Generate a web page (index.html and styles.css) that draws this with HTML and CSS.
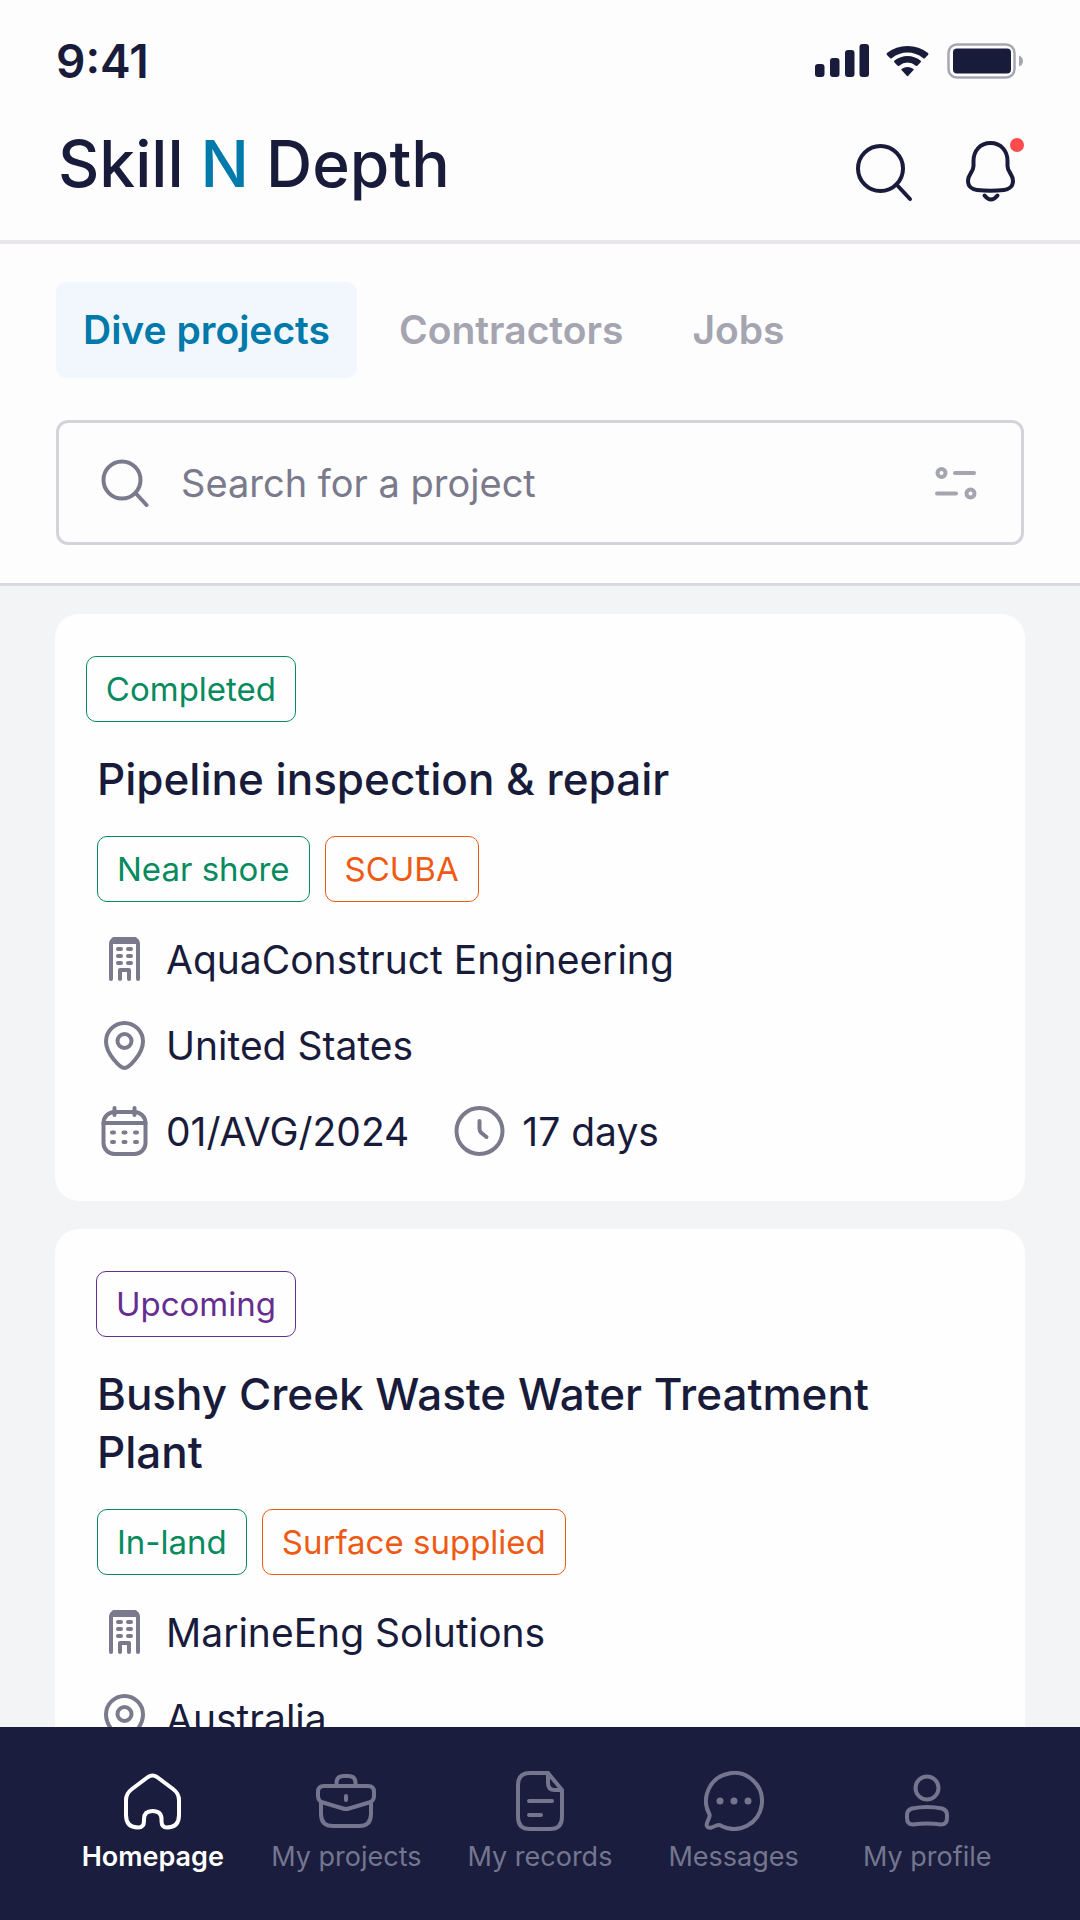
FILE: index.html
```html
<!DOCTYPE html>
<html lang="en">
<head>
<meta charset="utf-8">
<meta name="viewport" content="width=device-width, initial-scale=1">
<title>Skill N Depth</title>
<link rel="stylesheet" href="styles.css">
</head>
<body>
<svg class="sprite" aria-hidden="true">
  <symbol id="building" viewBox="0 0 54 54">
    <path d="M14 46V11q0-4 4-5h19q4 1 4 5v35M23 46v-9h9v9"/>
    <path d="M17 6h21M16 9h23M21 16h3M31 16h3M21 23h3M31 23h3M21 30h3M31 30h3"/>
  </symbol>
  <symbol id="pin" viewBox="0 0 54 54">
    <path d="M27.500 49C23.500 49 9 35 9 22.500a18.500 18.500 0 0 1 37 0C46 35 31.500 49 27.500 49z"/>
    <circle cx="27.500" cy="22" r="7"/>
  </symbol>
  <symbol id="calendar" viewBox="0 0 54 54">
    <rect x="6.500" y="7" width="42" height="42" rx="11"/>
    <path d="M6.500 18h42M17.500 3v7M37.500 3v7M15 27.500h2M26.500 27.500h2M38 27.500h2M15 37h2M26.500 37h2M38 37h2"/>
  </symbol>
  <symbol id="clock" viewBox="0 0 54 54">
    <circle cx="26.500" cy="26" r="23"/>
    <path d="M26.500 16v8q0 2 2 4l5 4"/>
  </symbol>
</svg>

<div class="app">
  <header class="header">
    <div class="status-bar">
      <time class="clock">9:41</time>
      <div class="indicators">
        <svg width="54" height="36" viewBox="0 0 54 36" fill="currentColor"><rect y="21" width="9.500" height="13" rx="3"/><rect x="15" y="15" width="9.500" height="19" rx="3"/><rect x="30" y="7" width="9.500" height="27" rx="3"/><rect x="44.500" y="1" width="9.500" height="33" rx="3"/></svg>
        <svg width="44" height="36" viewBox="0 0 44 36" fill="currentColor"><path d="M1 12Q0 11 1 10Q10 3 21.500 3T42 10Q43 11 42 12L39 15Q38 16 37 15Q30 9.500 21.500 9.500T6 15Q5 16 4 15Z"/><path d="M8.500 19.500Q7.500 18.500 8.500 17.500Q14.500 13 21.500 13T34.500 17.500Q35.500 18.500 34.500 19.500L31.500 22.500Q30.500 23.500 29.500 22.500Q26 19.500 21.500 19.500T13.500 22.500Q12.500 23.500 11.500 22.500Z"/><path d="M15.500 27Q15 26.500 15.500 26Q21.500 22 27.500 26Q28 26.500 27.500 27L22.500 32.500Q21.500 34 20.500 32.500Z"/></svg>
        <svg width="77" height="36" viewBox="0 0 77 36"><rect x="1.500" y="1.500" width="66" height="33" rx="8.500" fill="none" stroke="#a5a6b2" stroke-width="2.500"/><rect x="6" y="5.500" width="58" height="25" rx="4" fill="currentColor"/><path d="M72 12.500q4 1.500 4 5.500t-4 5.500z" fill="#a5a6b2"/></svg>
      </div>
    </div>
    <div class="brand-row">
      <h1 class="logo">Skill <span class="logo-accent">N</span> Depth</h1>
      <div class="header-actions">
        <button class="icon-button" type="button" aria-label="Search"><svg width="64" height="64" viewBox="0 0 64 64"><circle cx="27.500" cy="30.500" r="22.500"/><path d="M43.500 46.500L57 61"/></svg></button>
        <button class="icon-button" type="button" aria-label="Notifications"><svg width="64" height="64" viewBox="0 0 64 64"><path d="M30.500 5C20 5 13.500 13 13.500 23v5c0 6-5.500 8-5.500 15 0 6 5 8.500 9 9q13.500 1.500 27 0c4-.5 9-3 9-9 0-7-5.500-9-5.500-15v-5C47.500 13 41 5 30.500 5zM24.500 57.500q6.500 8 13 0"/><circle class="alert-dot" cx="57" cy="7" r="7"/></svg></button>
      </div>
    </div>
  </header>

  <section class="filters">
    <nav class="tabs" aria-label="Sections">
      <button class="tab tab-active" type="button">Dive projects</button>
      <button class="tab" type="button">Contractors</button>
      <button class="tab" type="button">Jobs</button>
    </nav>
    <div class="search">
      <svg class="search-icon" width="48" height="48" viewBox="0 0 48 48"><circle cx="21" cy="21" r="18.500"/><path d="M34.500 34L45.500 46"/></svg>
      <input class="search-input" type="text" placeholder="Search for a project" aria-label="Search for a project">
      <button class="filter-button" type="button" aria-label="Filters"><svg width="44" height="36" viewBox="0 0 44 36"><circle cx="6.500" cy="8" r="4"/><path d="M20 8h19M2 28.500h19"/><circle cx="35.500" cy="28.500" r="4"/></svg></button>
    </div>
  </section>

  <main class="projects">
    <article class="card">
      <div class="status"><span class="chip chip-green">Completed</span></div>
      <h2 class="title">Pipeline inspection &amp; repair</h2>
      <div class="chips"><span class="chip chip-green">Near shore</span><span class="chip chip-orange">SCUBA</span></div>
      <div class="details">
        <div class="detail"><svg class="icon"><use href="#building"/></svg>AquaConstruct Engineering</div>
        <div class="detail"><svg class="icon"><use href="#pin"/></svg>United States</div>
        <div class="detail-group">
          <div class="detail"><svg class="icon"><use href="#calendar"/></svg>01/AVG/2024</div>
          <div class="detail"><svg class="icon"><use href="#clock"/></svg>17 days</div>
        </div>
      </div>
    </article>
    <article class="card">
      <div class="status"><span class="chip chip-purple">Upcoming</span></div>
      <h2 class="title">Bushy Creek Waste Water Treatment Plant</h2>
      <div class="chips"><span class="chip chip-green">In-land</span><span class="chip chip-orange">Surface supplied</span></div>
      <div class="details">
        <div class="detail"><svg class="icon"><use href="#building"/></svg>MarineEng Solutions</div>
        <div class="detail"><svg class="icon"><use href="#pin"/></svg>Australia</div>
      </div>
    </article>
  </main>

  <nav class="bottom-nav" aria-label="Main">
    <a class="nav-item nav-active" href="#home"><svg class="nav-icon" viewBox="0 0 60 60"><path d="M25 6Q29.500 3 34 6L50 18Q56 22.500 56 29V44Q56 56.500 44 56.500Q38.500 56.500 38.500 50V48Q38.500 40 29.500 40Q21 40 21 48V50Q21 56.500 15 56.500Q3 56.500 3 44V29Q3 22.500 9 18Z"/></svg>Homepage</a>
    <a class="nav-item" href="#projects"><svg class="nav-icon" viewBox="0 0 60 60"><path d="M8 15h44q6 0 6 6v4q0 5-5 6.500l-20 6q-3 1-6 0l-20-6q-5-1.500-5-6.500v-4q0-6 6-6zM5 32v11q0 12 12 12h26q12 0 12-12V32M20.500 15v-3q0-7 7-7h5q7 0 7 7v3M30 25v4"/></svg>My projects</a>
    <a class="nav-item" href="#records"><svg class="nav-icon" viewBox="0 0 60 60"><path d="M38 2H20Q8 2 8 14V46Q8 58 20 58H40Q52 58 52 46V19L38 2V12q0 7 7 7h7M19 30h23M19 44h12"/></svg>My records</a>
    <a class="nav-item" href="#messages"><svg class="nav-icon" viewBox="0 0 60 60"><path d="M5.500 43.500A28 28 0 1 1 17.500 55q-2-1.500-5-.5l-5 2q-6 1-4.500-4.500l2-5q1-2 .5-3.500z"/><g fill="currentColor" stroke="none"><circle cx="16" cy="30" r="3.500"/><circle cx="30" cy="30" r="3.500"/><circle cx="44" cy="30" r="3.500"/></g></svg>Messages</a>
    <a class="nav-item" href="#profile"><svg class="nav-icon" viewBox="0 0 60 60"><circle cx="30" cy="17" r="11.500"/><path d="M10 44q0-5 5-6.500q15-3 30 0q5 1.500 5 6.500v3q0 6.500-6 6.500q-14-2-28 0q-6 0-6-6.500z"/></svg>My profile</a>
  </nav>
</div>
</body>
</html>
```
FILE: styles.css
```css
:root {
  --ink: #191b3b;
  --muted: #7a7a8c;
  --blue: #0079ab;
}

* {
  box-sizing: border-box;
}

body {
  margin: 0;
  font-family: Inter, "Liberation Sans", sans-serif;
  color: var(--ink);
}

button,
input {
  margin: 0;
  padding: 0;
  border: 0;
  background: none;
  font: inherit;
  color: inherit;
}

svg {
  display: block;
  flex: none;
}

.sprite {
  position: absolute;
  width: 0;
  height: 0;
}

.app {
  display: flex;
  flex-direction: column;
  height: 100vh;
  background: #f2f4f6;
}

.header {
  padding: 36px 56px 38px;
  background: #fdfdfe;
  border-bottom: 4px solid #e8e6eb;
}

.status-bar,
.brand-row {
  display: flex;
  justify-content: space-between;
}

.status-bar {
  align-items: center;
}

.clock {
  font-size: 46px;
  font-weight: 600;
  line-height: 50px;
}

.indicators {
  display: flex;
  gap: 17px;
}

.brand-row {
  margin-top: 52px;
}

.logo {
  margin: 0;
  padding-left: 2px;
  font-size: 64px;
  font-weight: 500;
  line-height: 52px;
}

.logo-accent {
  color: var(--blue);
}

.header-actions {
  display: flex;
  gap: 43px;
}

.icon-button svg {
  fill: none;
  stroke: currentColor;
  stroke-width: 4;
  stroke-linecap: round;
  stroke-linejoin: round;
}

.icon-button .alert-dot {
  fill: #ff4b4b;
  stroke: none;
}

.filters {
  padding: 38px 56px;
  background: #fdfdfe;
  border-bottom: 3px solid #dad9df;
}

.tabs {
  display: flex;
  gap: 15px;
}

.tab {
  padding: 0 27px;
  border-radius: 10px;
  font-size: 39px;
  font-weight: 600;
  line-height: 96px;
  color: #a4a5b0;
}

.tab-active {
  background: #f1f7fc;
  color: var(--blue);
}

.search {
  display: flex;
  align-items: center;
  gap: 32px;
  height: 125px;
  margin-top: 42px;
  padding: 0 42px;
  border: 3px solid #d5d3d9;
  border-radius: 12px;
  color: var(--muted);
}

.search svg {
  fill: none;
  stroke: currentColor;
  stroke-width: 4;
  stroke-linecap: round;
}

.search-input {
  flex: 1;
  min-width: 0;
  font-size: 38px;
  line-height: 48px;
  outline: none;
}

.search-input::placeholder {
  color: var(--muted);
  opacity: 1;
}

.filter-button {
  color: #a4a5b0;
}

.projects {
  display: flex;
  flex: 1;
  flex-direction: column;
  gap: 28px;
  min-height: 0;
  padding: 28px 55px;
  overflow-y: auto;
  scrollbar-width: none;
}

.card {
  display: flex;
  flex: none;
  flex-direction: column;
  gap: 28px;
  padding: 42px;
  border-radius: 24px;
  background: #fefefe;
}

.status {
  display: flex;
  justify-content: flex-end;
  width: 199px;
}

.chips {
  display: flex;
  gap: 15px;
}

.chip {
  flex: none;
  padding: 0 19px;
  border: 1px solid;
  border-radius: 10px;
  font-size: 33px;
  line-height: 64px;
}

.chip-green {
  color: #078a5e;
}

.chip-orange {
  color: #ee5a14;
}

.chip-purple {
  color: #662d91;
}

.title {
  margin: 0;
  font-size: 44px;
  font-weight: 500;
  line-height: 58px;
}

.details {
  display: flex;
  flex-direction: column;
  gap: 32px;
  padding-top: 3px;
}

.detail-group {
  display: flex;
  gap: 44px;
}

.detail {
  display: flex;
  gap: 15px;
  font-size: 39px;
  line-height: 54px;
}

.icon {
  width: 54px;
  height: 54px;
  fill: none;
  stroke: var(--muted);
  stroke-width: 4;
  stroke-linecap: round;
  stroke-linejoin: round;
}

.bottom-nav {
  display: grid;
  grid-template-columns: repeat(5, 1fr);
  flex: none;
  padding: 44px 56px 45px;
  background: #1a1d3d;
}

.nav-item {
  display: flex;
  flex-direction: column;
  align-items: center;
  gap: 8px;
  font-size: 27px;
  line-height: 36px;
  white-space: nowrap;
  text-decoration: none;
  color: #74768f;
}

.nav-active {
  font-weight: 600;
  color: #fff;
}

.nav-icon {
  width: 60px;
  height: 60px;
  fill: none;
  stroke: currentColor;
  stroke-width: 4;
  stroke-linecap: round;
  stroke-linejoin: round;
}
```
